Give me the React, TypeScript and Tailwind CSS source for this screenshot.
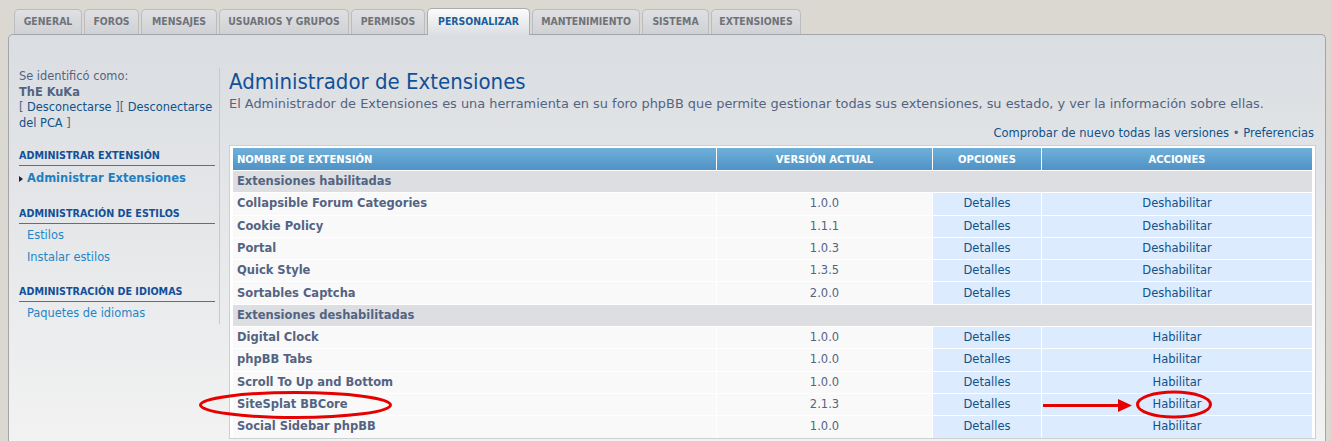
const tabs: [string, number][] = [
  ["GENERAL", 68],
  ["FOROS", 55],
  ["MENSAJES", 76],
  ["USUARIOS Y GRUPOS", 130],
  ["PERMISOS", 74],
  ["PERSONALIZAR", 103],
  ["MANTENIMIENTO", 108],
  ["SISTEMA", 67],
  ["EXTENSIONES", 90],
];

const enabled = [
  ["Collapsible Forum Categories", "1.0.0"],
  ["Cookie Policy", "1.1.1"],
  ["Portal", "1.0.3"],
  ["Quick Style", "1.3.5"],
  ["Sortables Captcha", "2.0.0"],
];

const disabled = [
  ["Digital Clock", "1.0.0"],
  ["phpBB Tabs", "1.0.0"],
  ["Scroll To Up and Bottom", "1.0.0"],
  ["SiteSplat BBCore", "2.1.3"],
  ["Social Sidebar phpBB", "1.0.0"],
];

const cols = "grid grid-cols-[483px_215px_108px_270px] gap-x-px";
const tabFont = { fontFamily: '"DejaVu Sans Condensed", Tahoma, sans-serif' };

function SectionRow({ label }: { label: string }) {
  return (
    <div className="h-[21.3px] bg-[#dcdee2] flex items-center px-1 font-bold text-[#536482] text-[11.5px]">
      {label}
    </div>
  );
}

function ExtRow({ name, version, action }: { name: string; version: string; action: string }) {
  return (
    <div className={`${cols} h-[21.3px] text-[11.5px]`}>
      <div className="bg-[#f9f9f9] flex items-center px-1 font-bold text-[#536482]">{name}</div>
      <div className="bg-[#f9f9f9] flex items-center justify-center text-[#536482]">{version}</div>
      <div className="bg-[#dcebfe] flex items-center justify-center text-[#105289]">Detalles</div>
      <div className="bg-[#dcebfe] flex items-center justify-center text-[#105289]">{action}</div>
    </div>
  );
}

function SideHeading({ children, className }: { children: string; className: string }) {
  return (
    <div className={`${className} border-b border-[#327aba] pb-[3px] text-[9.6px] font-bold text-[#115098] leading-[12px]`}>
      {children}
    </div>
  );
}

export default function App() {
  return (
    <div
      className="relative w-[1331px] h-[441px] overflow-hidden bg-[#dbd8d1] pl-2 pr-[5px]"
      style={{ fontFamily: '"DejaVu Sans", Verdana, sans-serif' }}
    >
      {/* Tabs */}
      <div className="flex items-end gap-[2px] pl-[6px] h-[34px]">
        {tabs.map(([t, w]) =>
          t === "PERSONALIZAR" ? (
            <div
              key={t}
              className="relative -mb-px z-10 h-[27px] flex items-center justify-center rounded-t-[5px] border border-b-0 border-[#a9abae] bg-gradient-to-b from-[#fafbfc] to-[#dcdfe3] text-[#1c5d99] font-bold text-[10.4px]"
              style={{ ...tabFont, width: w }}
            >
              {t}
            </div>
          ) : (
            <div
              key={t}
              className="h-[25px] flex items-center justify-center rounded-t-[5px] border border-b-0 border-[#babcbf] bg-gradient-to-b from-[#dfe0e2] to-[#cfd1d4] text-[#6f7278] font-bold text-[10.4px]"
              style={{ ...tabFont, width: w }}
            >
              {t}
            </div>
          )
        )}
      </div>

      {/* Panel */}
      <div className="h-[420px] rounded-t-[5px] border-t border-x border-[#a3a5a8] bg-gradient-to-b from-[#dadde1] to-[#f3f3f3] flex pt-[33px]">
        {/* Sidebar */}
        <div className="w-[211px] shrink-0 pl-[10px] text-[11.4px]">
          <div className="border-r border-[#c8cacd] h-[256px] pr-[4px]">
            <div className="text-[#536482] leading-[15.5px] pt-[1px]">
              <div>Se identificó como:</div>
              <div className="font-bold">ThE KuKa</div>
              <div className="text-[#105289]">
                <span className="text-[#536482]">[ </span>Desconectarse<span className="text-[#536482]"> ][ </span>Desconectarse del PCA<span className="text-[#536482]"> ]</span>
              </div>
            </div>

            <SideHeading className="mt-[19px]">ADMINISTRAR EXTENSIÓN</SideHeading>
            <div className="flex items-center h-[22px] mt-[2px] font-bold text-[#1f7fc1] text-[11.5px]">
              <svg width="4" height="6" viewBox="0 0 4 6" className="mr-[4px]">
                <path d="M0 0L4 3L0 6Z" fill="#222" />
              </svg>
              Administrar Extensiones
            </div>

            <SideHeading className="mt-[18px]">ADMINISTRACIÓN DE ESTILOS</SideHeading>
            <div className="pl-[8px] text-[#1f86c9] leading-[22px]">
              <div>Estilos</div>
              <div>Instalar estilos</div>
            </div>

            <SideHeading className="mt-[18px]">ADMINISTRACIÓN DE IDIOMAS</SideHeading>
            <div className="pl-[8px] text-[#1f86c9] leading-[22px]">
              <div>Paquetes de idiomas</div>
            </div>
          </div>
        </div>

        {/* Main */}
        <div className="flex-1 pl-[9px] pr-[9px]">
          <h1
            className="text-[22px] leading-[26px] text-[#115098] mt-[1px]"
            style={tabFont}
          >
            Administrador de Extensiones
          </h1>
          <p className="text-[12.9px] text-[#536482] leading-[16px] mt-[1px] whitespace-nowrap">
            El Administrador de Extensiones es una herramienta en su foro phpBB que permite gestionar todas sus extensiones, su estado, y ver la información sobre ellas.
          </p>
          <div className="text-right text-[11.5px] text-[#105289] mt-[14px] leading-[14px] pr-[2px]">
            Comprobar de nuevo todas las versiones <span className="text-[#536482]">•</span> Preferencias
          </div>

          <div className="mt-[5px] border border-[#cdcfd2] bg-white px-[3px] pt-[2px] flex flex-col gap-y-px">
            <div className={`${cols} h-[22px] text-[10px] font-bold text-white`}>
              <div className="bg-gradient-to-b from-[#6fb0da] to-[#4f92c4] flex items-center px-1">NOMBRE DE EXTENSIÓN</div>
              <div className="bg-gradient-to-b from-[#6fb0da] to-[#4f92c4] flex items-center justify-center">VERSIÓN ACTUAL</div>
              <div className="bg-gradient-to-b from-[#6fb0da] to-[#4f92c4] flex items-center justify-center">OPCIONES</div>
              <div className="bg-gradient-to-b from-[#6fb0da] to-[#4f92c4] flex items-center justify-center">ACCIONES</div>
            </div>
            <SectionRow label="Extensiones habilitadas" />
            {enabled.map(([n, v]) => (
              <ExtRow key={n} name={n} version={v} action="Deshabilitar" />
            ))}
            <SectionRow label="Extensiones deshabilitadas" />
            {disabled.map(([n, v]) => (
              <ExtRow key={n} name={n} version={v} action="Habilitar" />
            ))}
          </div>
        </div>
      </div>

      {/* Red annotations */}
      <svg className="absolute left-0 top-0 pointer-events-none" width="1331" height="441">
        <ellipse cx="295.5" cy="405" rx="95" ry="12.5" fill="none" stroke="#e60000" strokeWidth="3" />
        <ellipse cx="1174" cy="404.5" rx="36.5" ry="12.5" fill="none" stroke="#e60000" strokeWidth="3" />
        <line x1="1043" y1="405.5" x2="1122" y2="405.5" stroke="#e60000" strokeWidth="3" />
        <path d="M1118 399L1132 405.5L1118 412Z" fill="#e60000" />
      </svg>
    </div>
  );
}
